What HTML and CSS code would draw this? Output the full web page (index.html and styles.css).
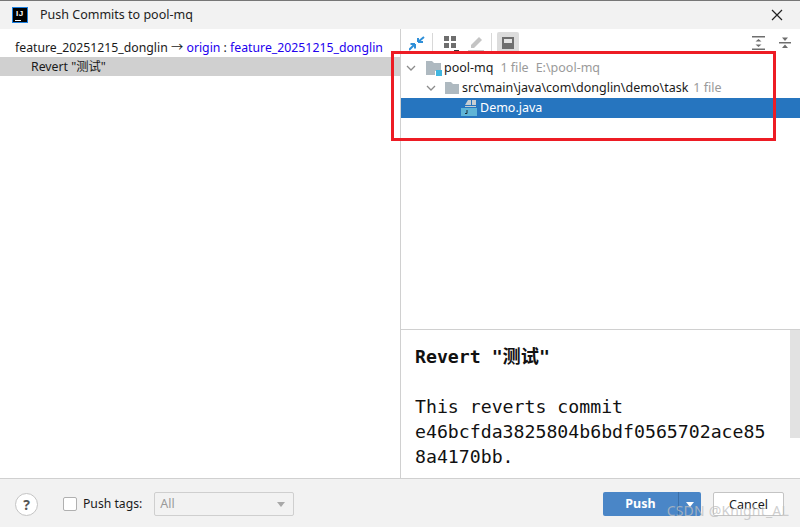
FILE: index.html
```html
<!DOCTYPE html>
<html lang="en">
<head>
<meta charset="utf-8">
<title>Push Commits to pool-mq</title>
<link rel="stylesheet" href="styles.css">
</head>
<body>
<div class="window">
  <header class="titlebar">
    <div class="logo"><span class="logo-text">IJ</span><span class="logo-bar"></span></div>
    <span class="title">Push Commits to pool-mq</span>
    <svg class="close" width="12" height="12" viewBox="0 0 12 12"><path d="M1 1l10 10M11 1L1 11" stroke="#222" stroke-width="1.2" fill="none"/></svg>
  </header>
  <main class="body">
    <section class="commits">
      <div class="branch">feature_20251215_donglin <span class="arrow">→</span> <span class="remote">origin</span> : <span class="remote">feature_20251215_donglin</span></div>
      <div class="commit">Revert "测试"</div>
    </section>
    <section class="changes">
      <div class="toolbar">
        <svg class="tool t-diff" width="16" height="16" viewBox="0 0 16 16"><path d="M0 15l6-6M6 9v4.500M6 9H1.500" stroke="#2f8fd8" stroke-width="2" fill="none"/><path d="M9 7l6-5M9 7V3M9 7h5" stroke="#2f8fd8" stroke-width="2" fill="none"/></svg>
        <span class="sep sep-a"></span>
        <svg class="tool t-group" width="16" height="16" viewBox="0 0 16 16"><path d="M1 1h5v5H1zM8 1h5v5H8zM1 8h5v5H1zM8 8h5v5H8z" fill="#6e6e6e"/><path d="M11 15h5v1h-5z" fill="#333"/></svg>
        <svg class="tool t-edit" width="16" height="16" viewBox="0 0 16 16"><path d="M3 10l8-8 3 3-8 8H3z" fill="#c4c4c4"/><path d="M0 15h16v1H0z" fill="#c4c4c4"/></svg>
        <span class="sep sep-b"></span>
        <span class="toggle"><svg width="14" height="14" viewBox="0 0 14 14"><path d="M1 1h12v12H1z" fill="#6e6e6e"/><path d="M3 3h8v4H3z" fill="#e4e4e4"/></svg></span>
        <span class="spacer"></span>
        <svg class="tool t-expand" width="14" height="16" viewBox="0 0 14 16"><path d="M0 1h13v1.500H0zM0 13.500h13V15H0z" fill="#6e6e6e"/><path d="M6.500 4l3 2.500h-6zM6.500 12l3-2.500h-6z" fill="#6e6e6e"/></svg>
        <svg class="tool t-collapse" width="14" height="16" viewBox="0 0 14 16"><path d="M1 7h12v1.500H1z" fill="#6e6e6e"/><path d="M7 6L4 2.500h6zM7 9.500l3 3.500H4z" fill="#6e6e6e"/></svg>
      </div>
      <div class="tree">
        <div class="row level-0">
          <svg class="chev" width="10" height="10" viewBox="0 0 10 10"><path d="M1 3l4 4 4-4" stroke="#8c8c8c" stroke-width="1.300" fill="none"/></svg>
          <svg class="icon" width="16" height="16" viewBox="0 0 16 16"><path d="M0 1h6l2 2h7v8H9v4H0z" fill="#aeb9c0"/><path d="M10 10h6v6h-6z" fill="#40b6e0"/></svg>
          <span class="name">pool-mq</span><span class="meta">1 file</span><span class="meta">E:\pool-mq</span>
        </div>
        <div class="row level-1">
          <svg class="chev" width="10" height="10" viewBox="0 0 10 10"><path d="M1 3l4 4 4-4" stroke="#8c8c8c" stroke-width="1.300" fill="none"/></svg>
          <svg class="icon" width="16" height="16" viewBox="0 0 16 16"><path d="M1 2h6l2 2h6v10H1z" fill="#aeb9c0"/></svg>
          <span class="name">src\main\java\com\donglin\demo\task</span><span class="meta">1 file</span>
        </div>
        <div class="row level-2 selected">
          <svg class="icon" width="16" height="16" viewBox="0 0 16 16"><path d="M7 0h3v5H4zM11 0h4v5h-4zM4 6h11v1H4z" fill="#c8ced2"/><path d="M0 8h16v8H0z" fill="#5fb4d6"/><path d="M6 10v3.500H4" stroke="#20303a" stroke-width="1" fill="none"/></svg>
          <span class="name">Demo.java</span>
        </div>
      </div>
      <div class="details">
        <div class="message"><strong>Revert "测试"</strong>

This reverts commit
e46bcfda3825804b6bdf0565702ace85
8a4170bb.</div>
        <div class="scrollbar"></div>
      </div>
    </section>
  </main>
  <footer class="footer">
    <div class="help">?</div>
    <label class="tags"><span class="checkbox"></span>Push tags:</label>
    <div class="select"><span>All</span><i class="caret"></i></div>
    <span class="spacer"></span>
    <div class="push"><span class="push-label">Push</span><span class="push-drop"><i class="caret white"></i></span></div>
    <div class="cancel">Cancel</div>
  </footer>
  <div class="highlight"></div>
  <div class="watermark">CSDN @Knight_AL</div>
</div>
</body>
</html>
```
FILE: styles.css
```css
* { box-sizing: border-box; }
html, body { margin: 0; padding: 0; }
body { width: 800px; height: 527px; overflow: hidden; background: #fff; }
.window {
  position: relative;
  width: 800px; height: 527px;
  display: flex; flex-direction: column;
  font: 13px/20px "Noto Sans", "Noto Sans CJK SC", sans-serif;
  color: #1a1a1a;
  border-top: 1px solid #777;
}
.titlebar {
  flex: 0 0 28px;
  display: flex; align-items: center;
  background: #f2f2f2;
  padding: 0 18px 0 12px;
}
.logo {
  position: relative;
  width: 16px; height: 16px; margin-right: 12px;
  background: #000; border: 1px solid #1b7fe0;
}
.logo-text {
  display: block; color: #fff; font: bold 8px/9px "Liberation Sans", sans-serif;
  padding-left: 3px; padding-top: 1px; letter-spacing: 0.5px;
}
.logo-bar { position: absolute; left: 2px; bottom: 1px; width: 6px; height: 1px; background: #fff; }
.title { flex: 1; font-size: 12.500px; color: #222; }
.close { display: block; margin-right: -1px; }

.body { flex: 1; display: flex; min-height: 0; }
.commits { flex: 0 0 401px; padding-top: 9px; border-right: 1px solid #d0d0d0; }
.branch { padding-left: 15px; white-space: nowrap; font-size: 12.280px; height: 19px; }
.arrow { color: #1a1a1a; }
.remote { color: #2200ee; }
.commit { height: 19px; line-height: 20px; background: #d0d0d0; padding-left: 31px; font-size: 12.300px; }

.changes { flex: 1; display: flex; flex-direction: column; min-width: 0; }
.toolbar { flex: 0 0 28px; display: flex; align-items: center; padding: 0 2px 0 8px; }
.tool { display: block; }
.t-diff { margin-right: 7px; }
.t-group { margin-right: 9px; }
.t-edit { margin-right: 7px; }
.t-expand { margin-right: 12px; }
.t-collapse { margin-right: 6px; }
.sep { width: 1px; height: 20px; background: #d8d8d8; }
.sep-a { margin-right: 10px; }
.sep-b { margin-right: 5px; }
.toggle {
  width: 22px; height: 22px; background: #dcdcdc; border-radius: 2px;
  display: flex; align-items: center; justify-content: center;
}
.spacer { flex: 1; }
.tree { flex: 1; padding-top: 1px; }
.row { display: flex; align-items: center; height: 20px; white-space: nowrap; font-size: 12.500px; }
.chev { display: block; margin-right: 10px; }
.icon { display: block; margin-right: 2px; }
.level-0 { padding-left: 5px; }
.level-1 { padding-left: 25px; }
.level-1 .chev { margin-right: 8px; }
.level-1 .meta { margin-left: 5px; }
.level-2 { padding-left: 60px; }
.level-2 .icon { margin-right: 3px; }
.selected { background: #2675bf; color: #fff; }
.meta { color: #9a9a9a; margin-left: 7px; }
.details {
  flex: 0 0 149px; position: relative;
  border-top: 1px solid #d0d0d0;
  overflow: hidden;
}
.message {
  font: 18.200px/25px "DejaVu Sans Mono", "Noto Sans CJK SC", monospace;
  color: #111; white-space: pre; padding: 14px 0 0 14px;
}
.message strong { font-weight: 700; }
.scrollbar { position: absolute; top: 0; right: 0; width: 10px; height: 108px; background: #e2e2e2; }

.footer {
  flex: 0 0 49px;
  display: flex; align-items: center;
  background: #f2f2f2; border-top: 1px solid #d0d0d0;
  padding: 2px 16px 0 15px;
}
.help {
  width: 23px; height: 23px; border-radius: 50%;
  background: #fff; border: 1px solid #c4c4c4;
  text-align: center; font-weight: 700; font-size: 14px; line-height: 21px; color: #555;
  margin-right: 25px;
}
.tags { display: flex; align-items: center; font-size: 12.200px; }
.checkbox {
  width: 14px; height: 14px; background: #fff; border: 1px solid #b0b0b0; border-radius: 2px;
  margin-right: 6px;
}
.select {
  width: 140px; height: 24px; margin-left: 12px;
  border: 1px solid #cfcfcf; border-radius: 2px; background: #f2f2f2;
  display: flex; align-items: center; justify-content: space-between;
  padding: 0 8px 0 5px; color: #9a9a9a; font-size: 12.500px;
}
.caret { width: 0; height: 0; border-left: 4.500px solid transparent; border-right: 4.500px solid transparent; border-top: 5px solid #a8a8a8; }
.caret.white { border-top-color: #fff; }
.push {
  width: 98px; height: 24px; display: flex;
  background: #4a86c7; border-radius: 2px; color: #fff; font-weight: 700;
}
.push-label { flex: 1; text-align: center; line-height: 23px; font-size: 12.500px; }
.push-drop {
  flex: 0 0 23px; border-left: 1px solid #3b6fa8;
  display: flex; align-items: center; justify-content: center;
}
.cancel {
  width: 71px; height: 24px; margin-left: 12px;
  background: #fff; border: 1px solid #c4c4c4; border-radius: 2px;
  text-align: center; line-height: 23px; font-size: 12.500px;
}
.highlight {
  position: absolute; left: 391px; top: 50px;
  width: 385px; height: 90px;
  border: 3px solid #ed1c24;
  pointer-events: none;
}
.watermark {
  position: absolute; right: 11px; bottom: 6px;
  font-size: 14px; line-height: 20px; color: rgba(190, 190, 190, 0.75);
  letter-spacing: 0.200px;
}
```
